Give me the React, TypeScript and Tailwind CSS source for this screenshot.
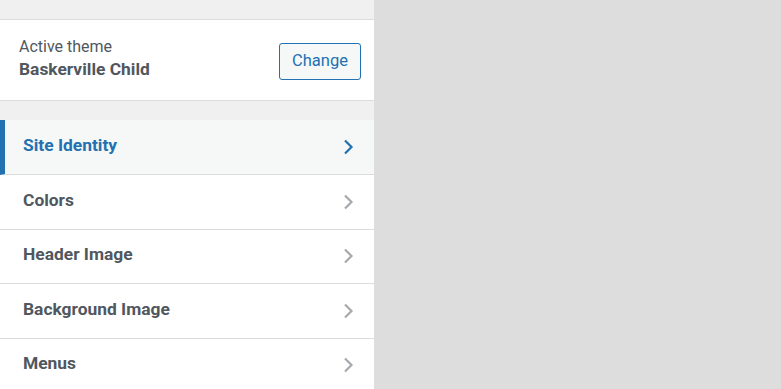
const sections = ["Site Identity", "Colors", "Header Image", "Background Image", "Menus"];

function Chevron({ active }: { active: boolean }) {
  return (
    <svg
      width="11"
      height="16"
      viewBox="0 0 11 16"
      fill="none"
      className={active ? "text-[#2271b1]" : "text-[#a7aaad]"}
    >
      <polyline points="2,1.5 8.5,8 2,14.5" stroke="currentColor" strokeWidth="2.2" />
    </svg>
  );
}

export default function App() {
  return (
    <div className="flex h-[389px] w-[781px] overflow-hidden font-['Roboto',sans-serif] text-[#50575e]">
      {/* Customizer sidebar */}
      <aside className="flex w-[374px] shrink-0 flex-col bg-[#f0f0f1]">
        <div className="h-[20px] shrink-0 border-b border-[#dcdcde]" />

        <div className="flex h-[81px] shrink-0 items-center justify-between border-b border-[#dcdcde] bg-white pl-[19px] pr-[13px]">
          <div className="mb-[4px] flex flex-col">
            <span className="text-[16px] leading-[22px]">Active theme</span>
            <span className="text-[17.4px] font-bold leading-[22px]">Baskerville Child</span>
          </div>
          <button className="mt-[2px] h-[37px] w-[82px] rounded-[3px] border border-[#2271b1] bg-[#f6f7f7] text-[16.5px] text-[#2271b1]">
            Change
          </button>
        </div>

        <div className="h-[19px] shrink-0" />

        <ul className="flex flex-col">
          {sections.map((name, i) => {
            const active = i === 0;
            return (
              <li
                key={name}
                className={
                  active
                    ? "flex h-[55px] shrink-0 items-center justify-between border-b border-l-[5px] border-[#dcdcde] border-l-[#2271b1] bg-[#f6f7f7] pl-[18px] pr-[20px] text-[#2271b1]"
                    : "flex h-[54.5px] shrink-0 items-center justify-between border-b border-[#dcdcde] bg-white pl-[23px] pr-[20px]"
                }
              >
                <span className="mb-[4px] text-[17.4px] font-bold">{name}</span>
                <Chevron active={active} />
              </li>
            );
          })}
        </ul>
      </aside>

      {/* Preview area */}
      <main className="flex-1 bg-[#dddddd]" />
    </div>
  );
}
